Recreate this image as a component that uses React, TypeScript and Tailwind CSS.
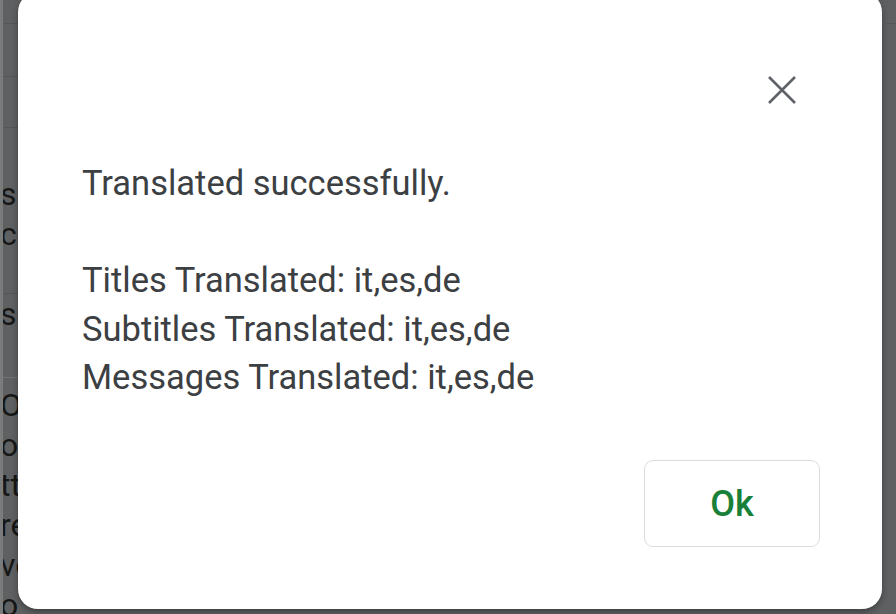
const font = { fontFamily: "Roboto, 'Liberation Sans', sans-serif" };

const StripCell = ({ lines, className }: { lines: string[]; className: string }) => (
  <div className={`border-b border-[#555656] overflow-hidden ${className}`}>
    {lines.map((l, i) => (
      <div key={i} className="h-[40px] leading-[40px] text-[32px] text-[#161717] whitespace-nowrap -ml-[3px]">
        {l}
      </div>
    ))}
  </div>
);

export default function App() {
  return (
    <div className="w-[896px] h-[614px] overflow-hidden bg-[#5f6061] flex" style={font}>
      {/* sheet behind the overlay */}
      <div className="w-[18px] shrink-0 flex flex-col border-l-[3px] border-[#7a7b7b] overflow-hidden">
        <StripCell lines={[]} className="h-[24px]" />
        <StripCell lines={[]} className="h-[53px]" />
        <StripCell lines={[]} className="h-[51px]" />
        <StripCell lines={["sh", "co"]} className="h-[166px] pt-[46px]" />
        <StripCell lines={["se"]} className="h-[84px] border-[#727373]" />
        <div className="flex-1 pt-[7px] overflow-hidden">
          {["O", "o", "tt", "re", "vc", "o/"].map((l, i) => (
            <div key={i} className="h-[40px] leading-[40px] text-[32px] text-[#161717] whitespace-nowrap -ml-[3px]">
              {l}
            </div>
          ))}
        </div>
      </div>

      <div className="w-[864px] h-[617px] -mt-[8px] shrink-0 bg-white rounded-[20px] flex flex-col shadow-[0_3px_6px_rgba(0,0,0,0.35)]">
        <div className="flex justify-end pt-[84px] pr-[86px]">
          <svg width="28" height="28" viewBox="0 0 28 28" fill="none">
            <path d="M1 1L27 27M27 1L1 27" stroke="#5f6368" strokeWidth="2.6" strokeLinecap="butt" />
          </svg>
        </div>
        <div className="mt-[55px] pl-[64px] text-[34.5px] leading-[48.5px] text-[#3c4043]">
          <div>Translated successfully.</div>
          <div className="h-[48.5px]" />
          <div>Titles Translated: it,es,de</div>
          <div>Subtitles Translated: it,es,de</div>
          <div>Messages Translated: it,es,de</div>
        </div>
        <div className="mt-auto flex justify-end pr-[62px] pb-[62px]">
          <div className="w-[176px] h-[87px] rounded-[9px] border-[1.5px] border-[#dadce0] flex items-center justify-center text-[36px] font-medium text-[#188038]">
            Ok
          </div>
        </div>
      </div>

      <div className="flex-1 flex flex-col">
        <div className="h-[24px] border-b border-[#555656]" />
      </div>
    </div>
  );
}
